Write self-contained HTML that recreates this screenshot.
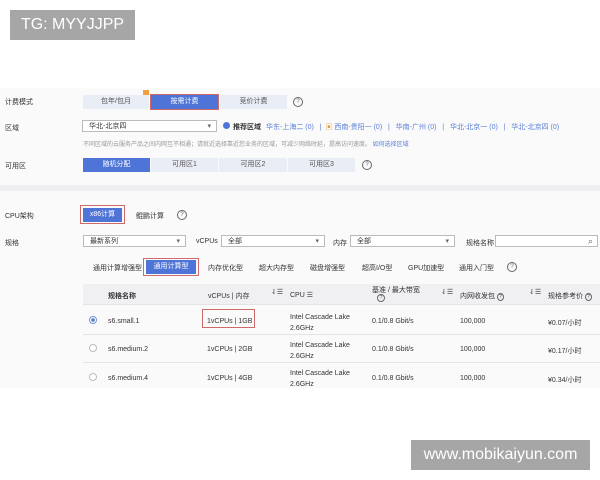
<!DOCTYPE html>
<html><head><meta charset="utf-8"><style>
body{margin:0;width:600px;height:480px;background:#fff;position:relative;overflow:hidden;font-family:"Liberation Sans","Noto Sans CJK SC",sans-serif;font-size:7px;color:#333}
.a{position:absolute;white-space:nowrap}
.btn{position:absolute;background:#e9edf6;color:#555;text-align:center;height:14px;line-height:14px}
.on{background:#4e74d8;color:#fff}
.q{position:absolute;width:8px;height:8px;border:1px solid #666;border-radius:50%;font-size:6px;line-height:8px;text-align:center;color:#666}
.sel{position:absolute;background:#fff;border:1px solid #bbb;height:12px;line-height:12px;padding-left:6px;box-sizing:border-box}
.sel:after{content:"▾";position:absolute;right:5px;top:0;color:#666}
.lnk{color:#5b7fd6}
.wm{position:absolute;background:#a6a6a6;color:#fff;font-size:16px;line-height:30px;text-align:center}
.line{position:absolute;left:83px;width:517px;height:1px;background:#e4e4e8}
</style></head><body>
<div class="a" style="left:0;top:88px;width:600px;height:300px;background:#fafafb"></div>
<div class="a" style="left:0;top:185px;width:600px;height:6px;background:#efeff1"></div>

<div class="a" style="left:5px;top:97px">计费模式</div>
<div class="btn" style="left:83px;top:95px;width:66px">包年/包月</div>
<div class="btn on" style="left:150px;top:94px;width:67px;border:1px solid #d06a6a">按需计费</div>
<div class="a" style="left:143px;top:90px;width:6px;height:5px;background:#f0a040"></div>
<div class="btn" style="left:220px;top:95px;width:67px">竞价计费</div>
<div class="q" style="left:293px;top:97px">?</div>

<div class="a" style="left:5px;top:123px">区域</div>
<div class="sel" style="left:82px;top:120px;width:135px">华北-北京四</div>
<div class="a" style="left:223px;top:122px;width:7px;height:7px;border-radius:50%;background:#4e74d8"></div>
<div class="a" style="left:233px;top:122px;font-weight:bold">推荐区域</div>
<div class="a lnk" style="left:266px;top:122px">华东-上海二 (0) &nbsp;&nbsp;| &nbsp;<span style="color:#e09030">▣</span> 西南-贵阳一 (0) &nbsp;&nbsp;| &nbsp;&nbsp;华南-广州 (0) &nbsp;&nbsp;| &nbsp;&nbsp;华北-北京一 (0) &nbsp;&nbsp;| &nbsp;&nbsp;华北-北京四 (0)</div>
<div class="a" style="left:83px;top:139px;color:#999;font-size:6px">不同区域的云服务产品之间内网互不相通；请就近选择靠近您业务的区域，可减少网络时延，提高访问速度。 <span class="lnk">如何选择区域</span></div>

<div class="a" style="left:5px;top:161px">可用区</div>
<div class="btn on" style="left:83px;top:158px;width:67px">随机分配</div>
<div class="btn" style="left:151px;top:158px;width:67px">可用区1</div>
<div class="btn" style="left:219px;top:158px;width:68px">可用区2</div>
<div class="btn" style="left:288px;top:158px;width:67px">可用区3</div>
<div class="q" style="left:362px;top:160px">?</div>

<div class="a" style="left:5px;top:211px">CPU架构</div>
<div class="a" style="left:80px;top:205px;width:45px;height:19px;border:1px solid #d06a6a;box-sizing:border-box"></div>
<div class="btn on" style="left:83px;top:208px;width:39px">x86计算</div>
<div class="a" style="left:136px;top:211px">鲲鹏计算</div>
<div class="q" style="left:177px;top:210px">?</div>

<div class="a" style="left:5px;top:238px">规格</div>
<div class="sel" style="left:83px;top:235px;width:103px">最新系列</div>
<div class="a" style="left:196px;top:238px">vCPUs</div>
<div class="sel" style="left:221px;top:235px;width:104px">全部</div>
<div class="a" style="left:333px;top:238px">内存</div>
<div class="sel" style="left:350px;top:235px;width:105px">全部</div>
<div class="a" style="left:466px;top:238px">规格名称</div>
<div class="a" style="left:495px;top:235px;width:103px;height:12px;border:1px solid #bbb;background:#fff;box-sizing:border-box"><span style="position:absolute;right:4px;top:0;font-size:9px;line-height:11px;color:#666">⌕</span></div>

<div class="a" style="left:93px;top:263px">通用计算增强型</div>
<div class="a" style="left:143px;top:258px;width:56px;height:18px;border:1px solid #d06a6a;box-sizing:border-box"></div>
<div class="btn on" style="left:146px;top:260px;width:50px">通用计算型</div>
<div class="a" style="left:208px;top:263px">内存优化型</div>
<div class="a" style="left:259px;top:263px">超大内存型</div>
<div class="a" style="left:310px;top:263px">磁盘增强型</div>
<div class="a" style="left:362px;top:263px">超高I/O型</div>
<div class="a" style="left:408px;top:263px">GPU加速型</div>
<div class="a" style="left:459px;top:263px">通用入门型</div>
<div class="q" style="left:507px;top:262px">?</div>

<div class="a" style="left:83px;top:284px;width:517px;height:20px;background:#f0f0f3"></div>
<div class="a" style="left:108px;top:291px;font-weight:bold">规格名称</div>
<div class="a" style="left:208px;top:291px">vCPUs | 内存</div>
<div class="a" style="left:271px;top:288px">⇃☰</div>
<div class="a" style="left:290px;top:291px">CPU ☰</div>
<div class="a" style="left:372px;top:285px">基准 / 最大带宽</div>
<div class="q" style="left:377px;top:294px;width:6px;height:6px;line-height:6px;font-size:5px">?</div>
<div class="a" style="left:441px;top:288px">⇃☰</div>
<div class="a" style="left:460px;top:291px">内网收发包 <span style="border:1px solid #666;border-radius:50%;padding:0 1px;font-size:5px">?</span></div>
<div class="a" style="left:529px;top:288px">⇃☰</div>
<div class="a" style="left:548px;top:291px">规格参考价 <span style="border:1px solid #666;border-radius:50%;padding:0 1px;font-size:5px">?</span></div>

<div class="line" style="top:304px"></div>
<div class="a" style="left:89px;top:316px;width:6px;height:6px;border:1px solid #7a93d8;border-radius:50%;background:radial-gradient(#4e74d8 40%,#fff 45%)"></div>
<div class="a" style="left:108px;top:318px">s6.small.1</div>
<div class="a" style="left:202px;top:309px;width:53px;height:19px;border:1px solid #d06a6a;box-sizing:border-box"></div>
<div class="a" style="left:207px;top:318px">1vCPUs | 1GB</div>
<div class="a" style="left:290px;top:312px;line-height:11px">Intel Cascade Lake<br>2.6GHz</div>
<div class="a" style="left:372px;top:318px">0.1/0.8 Gbit/s</div>
<div class="a" style="left:460px;top:318px">100,000</div>
<div class="a" style="left:548px;top:318px">¥0.07/小时</div>

<div class="line" style="top:334px"></div>
<div class="a" style="left:89px;top:344px;width:6px;height:6px;border:1px solid #bbb;border-radius:50%;background:#fff"></div>
<div class="a" style="left:108px;top:346px">s6.medium.2</div>
<div class="a" style="left:207px;top:346px">1vCPUs | 2GB</div>
<div class="a" style="left:290px;top:340px;line-height:11px">Intel Cascade Lake<br>2.6GHz</div>
<div class="a" style="left:372px;top:346px">0.1/0.8 Gbit/s</div>
<div class="a" style="left:460px;top:346px">100,000</div>
<div class="a" style="left:548px;top:346px">¥0.17/小时</div>

<div class="line" style="top:362px"></div>
<div class="a" style="left:89px;top:373px;width:6px;height:6px;border:1px solid #bbb;border-radius:50%;background:#fff"></div>
<div class="a" style="left:108px;top:375px">s6.medium.4</div>
<div class="a" style="left:207px;top:375px">1vCPUs | 4GB</div>
<div class="a" style="left:290px;top:368px;line-height:11px">Intel Cascade Lake<br>2.6GHz</div>
<div class="a" style="left:372px;top:375px">0.1/0.8 Gbit/s</div>
<div class="a" style="left:460px;top:375px">100,000</div>
<div class="a" style="left:548px;top:375px">¥0.34/小时</div>

<div class="wm" style="left:10px;top:10px;width:125px;height:30px">TG: MYYJJPP</div>
<div class="wm" style="left:411px;top:440px;width:179px;height:30px">www.mobikaiyun.com</div>
</body></html>
